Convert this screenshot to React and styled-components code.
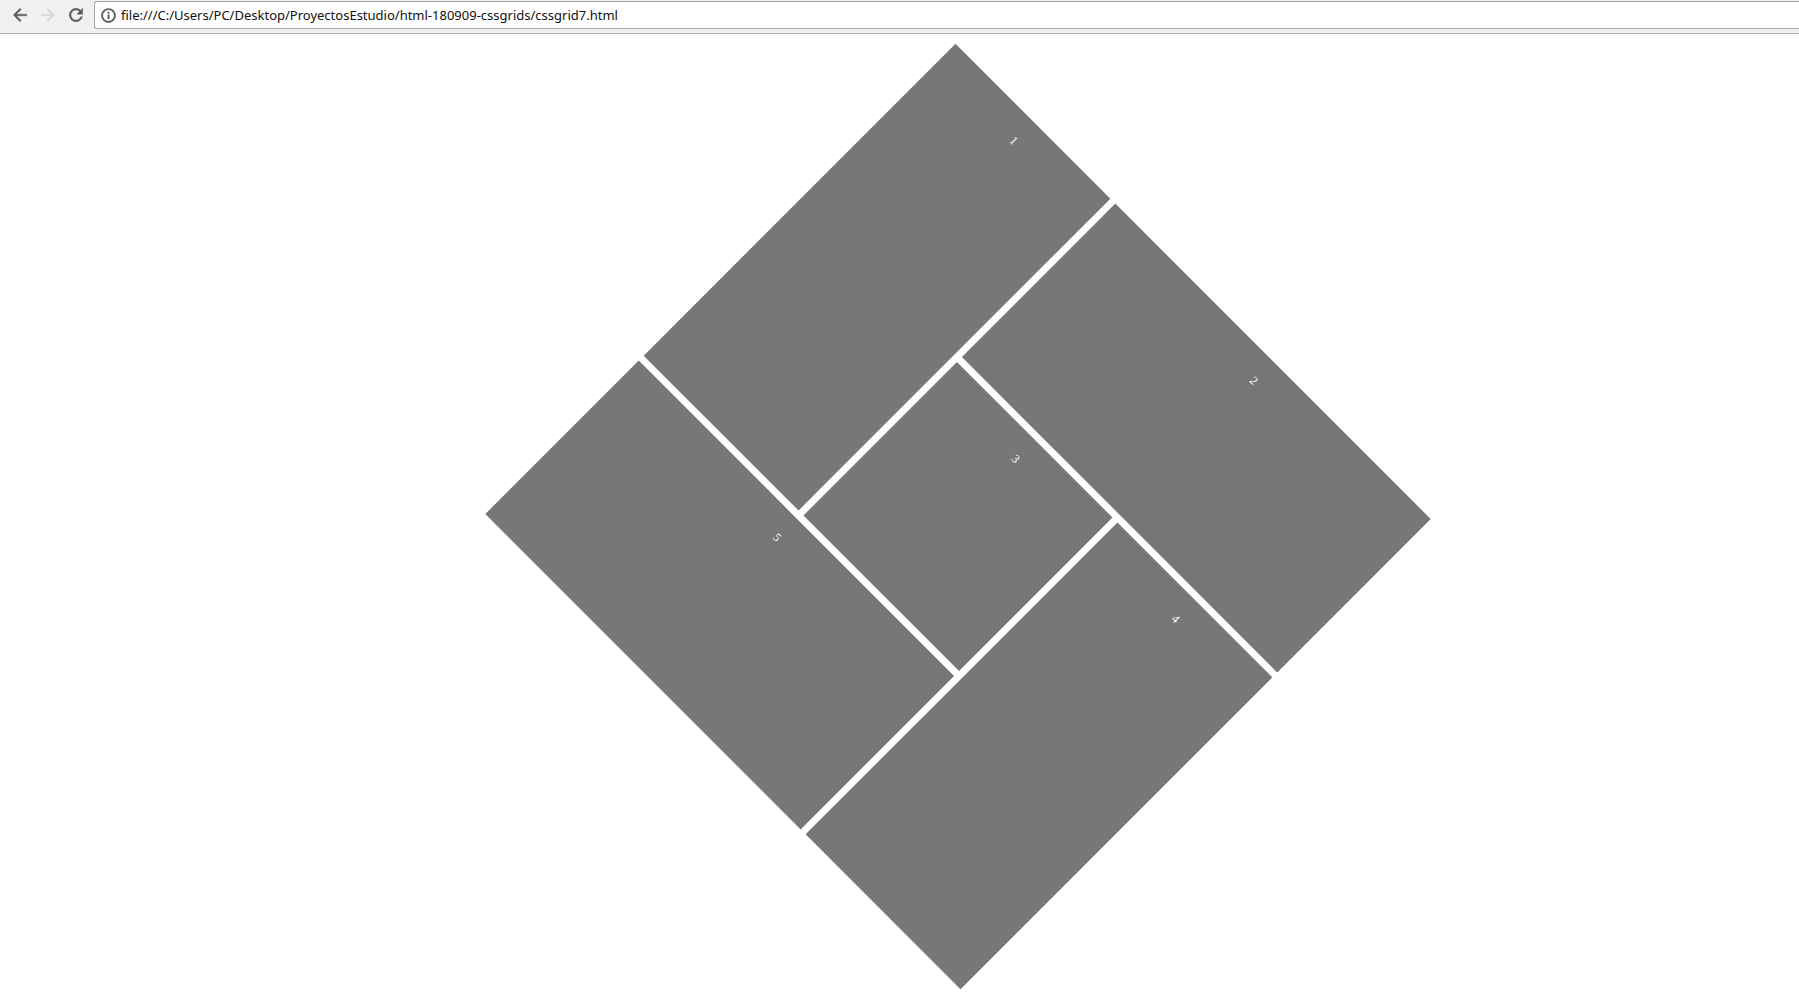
import React from "react";
import styled, { createGlobalStyle } from "styled-components";
import { MdArrowBack, MdArrowForward, MdRefresh, MdInfoOutline } from "react-icons/md";

const GlobalStyle = createGlobalStyle`
  *, *::before, *::after {
    box-sizing: border-box;
  }
  body {
    margin: 0;
    background: #fff;
    overflow: hidden;
  }
`;

const Page = styled.div`
  display: flex;
  flex-direction: column;
  min-height: 100vh;
`;

const Toolbar = styled.header`
  display: flex;
  align-items: flex-start;
  gap: 8px;
  padding: 1px 0 4px 10px;
  background: #f2f1f2;
  border-bottom: 1px solid #b2b1b2;
`;

const NavButton = styled.button`
  display: flex;
  align-items: center;
  justify-content: center;
  width: 20px;
  height: 28px;
  padding: 0;
  border: 0;
  background: none;
  color: ${({ $dim }) => ($dim ? "#d6d6d6" : "#5a5a5a")};
  font-size: 20px;

  path:last-child {
    stroke: currentColor;
    stroke-width: 0.5;
  }
`;

const AddressBar = styled.label`
  display: flex;
  flex: 1;
  align-items: center;
  gap: 4px;
  height: 28px;
  padding-left: 5px;
  background: #fff;
  border: 1px solid #a9a8a9;
  border-right: 0;
  border-radius: 3px 0 0 3px;
  color: #505050;
  font-size: 17px;

  path:last-child {
    stroke: currentColor;
    stroke-width: 0.5;
  }
`;

const AddressInput = styled.input`
  flex: 1;
  min-width: 0;
  padding: 0;
  border: 0;
  outline: 0;
  background: none;
  color: #111;
  font: 13px/20px "Noto Sans", "Open Sans", sans-serif;
`;

const Stage = styled.main`
  display: flex;
  flex: 1;
  align-items: center;
  justify-content: center;
  padding: 0 0 6px 117px;
`;

const Diamond = styled.div`
  display: grid;
  grid-template-columns: repeat(3, 1fr);
  grid-template-rows: repeat(3, 1fr);
  gap: 7px;
  width: calc(100vh - 333px);
  height: calc(100vh - 340px);
  transform: rotate(45deg);
`;

const Tile = styled.div`
  grid-column: ${({ $column }) => $column};
  grid-row: ${({ $row }) => $row};
  padding: 20px;
  background: #777;
  color: #fff;
  font: 12px/14px "Liberation Serif", "Times New Roman", serif;
  text-align: center;
`;

const tiles = [
  { label: "1", column: "1", row: "1 / span 2" },
  { label: "2", column: "2 / span 2", row: "1" },
  { label: "3", column: "2", row: "2" },
  { label: "4", column: "3", row: "2 / span 2" },
  { label: "5", column: "1 / span 2", row: "3" },
];

export default function App() {
  return (
    <>
      <GlobalStyle />
      <Page>
        <Toolbar>
          <NavButton type="button" aria-label="Back">
            <MdArrowBack />
          </NavButton>
          <NavButton type="button" aria-label="Forward" $dim disabled>
            <MdArrowForward />
          </NavButton>
          <NavButton type="button" aria-label="Reload">
            <MdRefresh />
          </NavButton>
          <AddressBar>
            <MdInfoOutline aria-hidden="true" />
            <AddressInput
              type="text"
              aria-label="Address"
              spellCheck={false}
              defaultValue="file:///C:/Users/PC/Desktop/ProyectosEstudio/html-180909-cssgrids/cssgrid7.html"
            />
          </AddressBar>
        </Toolbar>
        <Stage>
          <Diamond>
            {tiles.map(({ label, column, row }) => (
              <Tile key={label} $column={column} $row={row}>
                {label}
              </Tile>
            ))}
          </Diamond>
        </Stage>
      </Page>
    </>
  );
}
